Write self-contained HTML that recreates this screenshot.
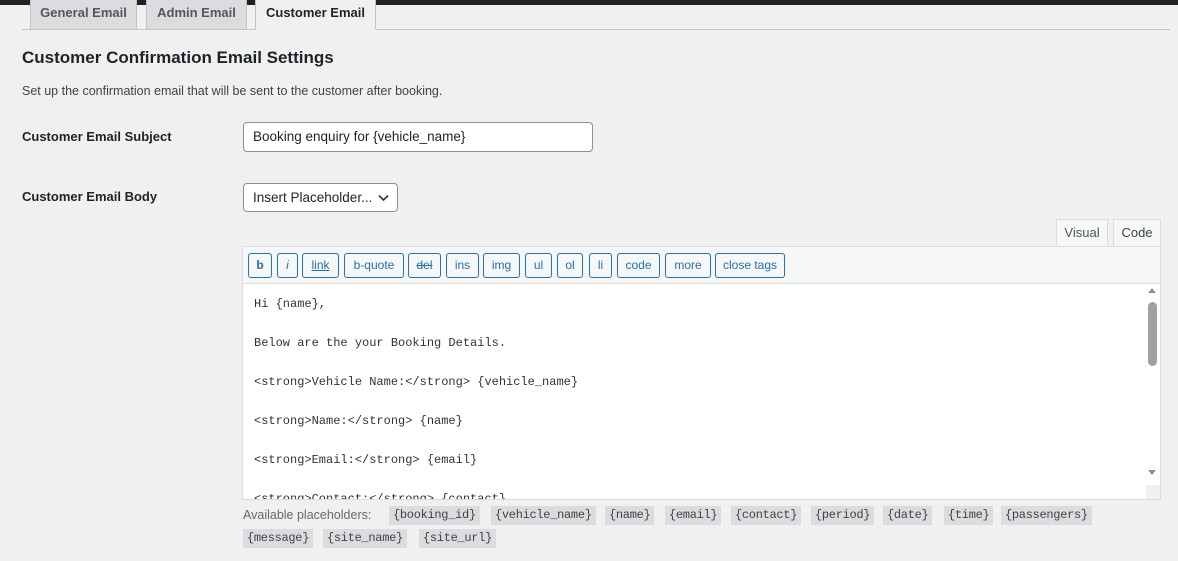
<!DOCTYPE html>
<html><head><style>
*{box-sizing:border-box;margin:0;padding:0}
body{width:1178px;height:561px;background:#f0f0f1;font-family:"Liberation Sans",sans-serif;color:#1d2327;position:relative;overflow:hidden;font-size:13px}
.a{position:absolute}
.topbar{left:0;top:0;width:1178px;height:5px;background:#1d2327}
.tab{top:0;height:30px;background:#dcdcde;border:1px solid #c3c4c7;border-top:none;color:#50575e;font-size:13px;font-weight:bold;text-align:center;line-height:25px}
.line{left:22px;top:29px;width:1148px;height:1px;background:#c3c4c7}
.btn{top:253px;height:25px;border:1px solid #2271b1;border-radius:3px;background:#f6f7f7;color:#2271b1;font-size:12px;text-align:center;line-height:23px}
.code{font-family:"Liberation Mono",monospace;font-size:12px;color:#2c3338;left:254px}
.ph{background:#dcdcde;font-family:"Liberation Mono",monospace;font-size:12px;color:#3c434a;height:19px;line-height:19px;padding:0 4px;letter-spacing:-0.3px}
</style></head><body>
<div class="a topbar"></div>
<div class="a line"></div>
<div class="a tab" style="left:30px;width:107px">General Email</div>
<div class="a tab" style="left:146px;width:101px">Admin Email</div>
<div class="a tab" style="left:255px;width:121px;background:#f0f0f1;color:#1d2327;height:30px;border-bottom:1px solid #f0f0f1">Customer Email</div>
<div class="a" style="left:22px;top:48px;font-size:17px;font-weight:bold">Customer Confirmation Email Settings</div>
<div class="a" style="left:22px;top:84px;font-size:12.5px;color:#3c434a">Set up the confirmation email that will be sent to the customer after booking.</div>
<div class="a" style="left:22px;top:129px;font-size:13px;font-weight:bold">Customer Email Subject</div>
<div class="a" style="left:243px;top:122px;width:350px;height:30px;background:#fff;border:1px solid #8c8f94;border-radius:4px;font-size:13.5px;padding:7px 9px;line-height:14px">Booking enquiry for {vehicle_name}</div>
<div class="a" style="left:22px;top:189px;font-size:13px;font-weight:bold">Customer Email Body</div>
<div class="a" style="left:243px;top:183px;width:155px;height:29px;background:#fff;border:1px solid #8c8f94;border-radius:4px;font-size:13.5px;padding:6px 9px;line-height:15px">Insert Placeholder...
<svg class="a" style="right:8px;top:10px" width="11" height="8" viewBox="0 0 11 8"><path d="M1 1.5l4.5 4.5 4.5-4.5" stroke="#2c3338" stroke-width="1.6" fill="none"/></svg></div>
<div class="a" style="left:1056px;top:219px;width:52px;height:28px;background:#f6f7f7;border:1px solid #dcdcde;color:#50575e;font-size:13px;text-align:center;line-height:26px">Visual</div>
<div class="a" style="left:1113px;top:219px;width:48px;height:28px;background:#f6f7f7;border:1px solid #dcdcde;border-bottom:none;color:#3c434a;font-size:13px;text-align:center;line-height:26px">Code</div>
<div class="a" style="left:242px;top:246px;width:919px;height:254px;background:#fff;border:1px solid #dcdcde"></div>
<div class="a" style="left:243px;top:247px;width:917px;height:37px;background:#f6f7f7;border-bottom:1px solid #dcdcde"></div>
<div class="a btn" style="left:248px;width:24px;font-weight:bold">b</div>
<div class="a btn" style="left:277px;width:21px;font-style:italic">i</div>
<div class="a btn" style="left:302px;width:37px;text-decoration:underline">link</div>
<div class="a btn" style="left:344px;width:60px">b-quote</div>
<div class="a btn" style="left:408px;width:33px;text-decoration:line-through">del</div>
<div class="a btn" style="left:446px;width:33px">ins</div>
<div class="a btn" style="left:483px;width:37px">img</div>
<div class="a btn" style="left:525px;width:27px">ul</div>
<div class="a btn" style="left:557px;width:26px">ol</div>
<div class="a btn" style="left:589px;width:23px">li</div>
<div class="a btn" style="left:617px;width:43px">code</div>
<div class="a btn" style="left:665px;width:46px">more</div>
<div class="a btn" style="left:715px;width:70px">close tags</div>
<div class="a code" style="top:297px">Hi {name},</div>
<div class="a code" style="top:336px">Below are the your Booking Details.</div>
<div class="a code" style="top:375px">&lt;strong&gt;Vehicle Name:&lt;/strong&gt; {vehicle_name}</div>
<div class="a code" style="top:414px">&lt;strong&gt;Name:&lt;/strong&gt; {name}</div>
<div class="a code" style="top:453px">&lt;strong&gt;Email:&lt;/strong&gt; {email}</div>
<div class="a" style="left:243px;top:485px;width:903px;height:14px;overflow:hidden"><div class="a code" style="left:11px;top:7px">&lt;strong&gt;Contact:&lt;/strong&gt; {contact}</div></div>
<div class="a" style="left:1146px;top:285px;width:14px;height:214px;background:#fff"></div>
<div class="a" style="left:1148px;top:302px;width:9px;height:64px;background:#a0a0a0;border-radius:5px"></div>
<div class="a" style="left:1148px;top:288px;width:0;height:0;border-left:4px solid transparent;border-right:4px solid transparent;border-bottom:5px solid #8c8f94"></div>
<div class="a" style="left:1148px;top:470px;width:0;height:0;border-left:4px solid transparent;border-right:4px solid transparent;border-top:5px solid #8c8f94"></div>
<div class="a" style="left:1146px;top:485px;width:14px;height:14px;background:#f0f0f1"></div>
<div class="a" style="left:243px;top:508px;font-size:12.5px;color:#646970">Available placeholders:</div>
<div class="a ph" style="left:389px;top:506px">{booking_id}</div>
<div class="a ph" style="left:491px;top:506px">{vehicle_name}</div>
<div class="a ph" style="left:605px;top:506px">{name}</div>
<div class="a ph" style="left:665px;top:506px">{email}</div>
<div class="a ph" style="left:731px;top:506px">{contact}</div>
<div class="a ph" style="left:811px;top:506px">{period}</div>
<div class="a ph" style="left:883px;top:506px">{date}</div>
<div class="a ph" style="left:944px;top:506px">{time}</div>
<div class="a ph" style="left:1001px;top:506px">{passengers}</div>
<div class="a ph" style="left:243px;top:529px">{message}</div>
<div class="a ph" style="left:323px;top:529px">{site_name}</div>
<div class="a ph" style="left:419px;top:529px">{site_url}</div>
</body></html>
